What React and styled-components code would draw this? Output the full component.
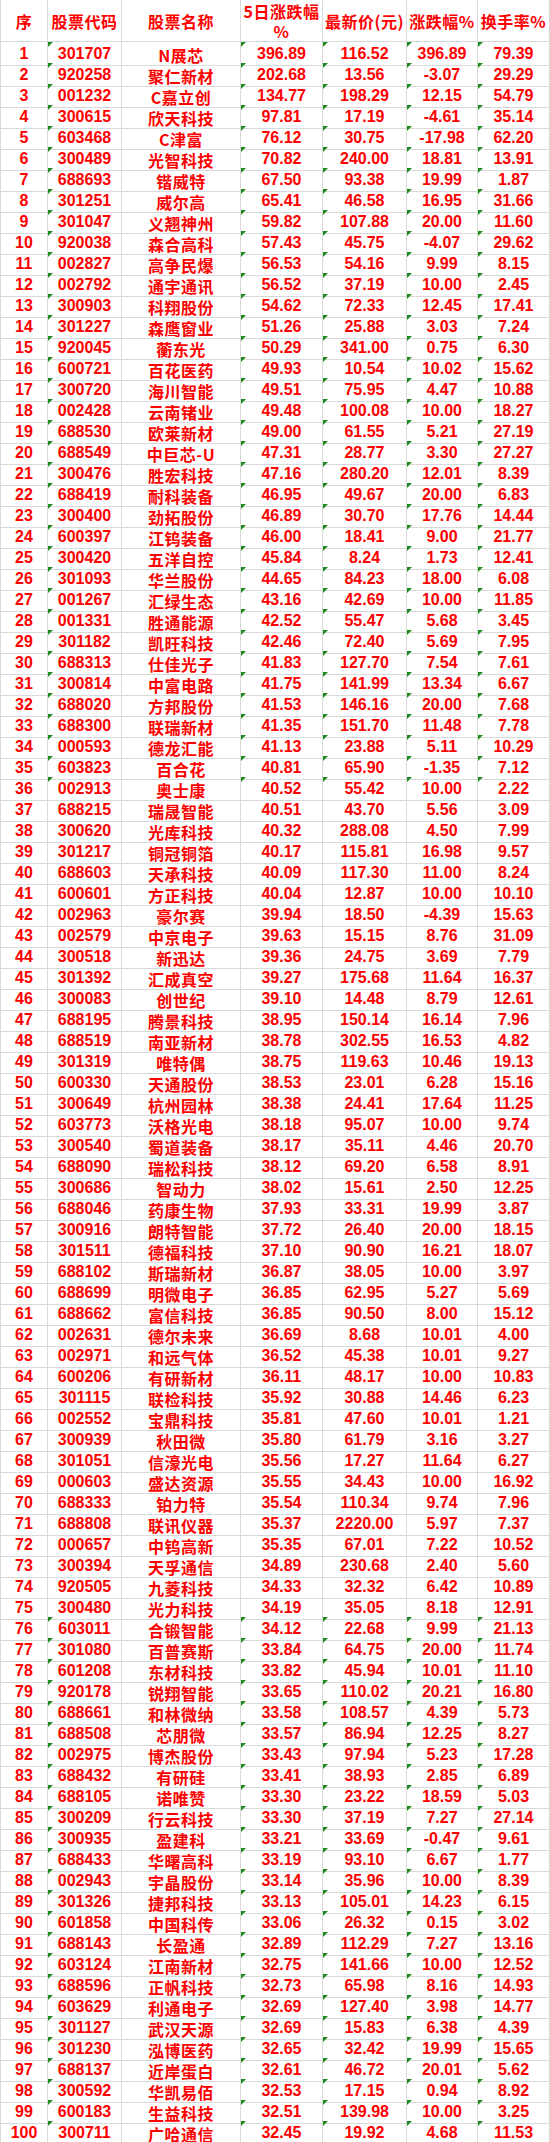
import React from 'react';
import styled, { createGlobalStyle } from 'styled-components';

const rows = `1 301707 N展芯 396.89 116.52 396.89 79.39
2 920258 聚仁新材 202.68 13.56 -3.07 29.29
3 001232 C嘉立创 134.77 198.29 12.15 54.79
4 300615 欣天科技 97.81 17.19 -4.61 35.14
5 603468 C津富 76.12 30.75 -17.98 62.20
6 300489 光智科技 70.82 240.00 18.81 13.91
7 688693 锴威特 67.50 93.38 19.99 1.87
8 301251 威尔高 65.41 46.58 16.95 31.66
9 301047 义翘神州 59.82 107.88 20.00 11.60
10 920038 森合高科 57.43 45.75 -4.07 29.62
11 002827 高争民爆 56.53 54.16 9.99 8.15
12 002792 通宇通讯 56.52 37.19 10.00 2.45
13 300903 科翔股份 54.62 72.33 12.45 17.41
14 301227 森鹰窗业 51.26 25.88 3.03 7.24
15 920045 蘅东光 50.29 341.00 0.75 6.30
16 600721 百花医药 49.93 10.54 10.02 15.62
17 300720 海川智能 49.51 75.95 4.47 10.88
18 002428 云南锗业 49.48 100.08 10.00 18.27
19 688530 欧莱新材 49.00 61.55 5.21 27.19
20 688549 中巨芯-U 47.31 28.77 3.30 27.27
21 300476 胜宏科技 47.16 280.20 12.01 8.39
22 688419 耐科装备 46.95 49.67 20.00 6.83
23 300400 劲拓股份 46.89 30.70 17.76 14.44
24 600397 江钨装备 46.00 18.41 9.00 21.77
25 300420 五洋自控 45.84 8.24 1.73 12.41
26 301093 华兰股份 44.65 84.23 18.00 6.08
27 001267 汇绿生态 43.16 42.69 10.00 11.85
28 001331 胜通能源 42.52 55.47 5.68 3.45
29 301182 凯旺科技 42.46 72.40 5.69 7.95
30 688313 仕佳光子 41.83 127.70 7.54 7.61
31 300814 中富电路 41.75 141.99 13.34 6.67
32 688020 方邦股份 41.53 146.16 20.00 7.68
33 688300 联瑞新材 41.35 151.70 11.48 7.78
34 000593 德龙汇能 41.13 23.88 5.11 10.29
35 603823 百合花 40.81 65.90 -1.35 7.12
36 002913 奥士康 40.52 55.42 10.00 2.22
37 688215 瑞晟智能 40.51 43.70 5.56 3.09
38 300620 光库科技 40.32 288.08 4.50 7.99
39 301217 铜冠铜箔 40.17 115.81 16.98 9.57
40 688603 天承科技 40.09 117.30 11.00 8.24
41 600601 方正科技 40.04 12.87 10.00 10.10
42 002963 豪尔赛 39.94 18.50 -4.39 15.63
43 002579 中京电子 39.63 15.15 8.76 31.09
44 300518 新迅达 39.36 24.75 3.69 7.79
45 301392 汇成真空 39.27 175.68 11.64 16.37
46 300083 创世纪 39.10 14.48 8.79 12.61
47 688195 腾景科技 38.95 150.14 16.14 7.96
48 688519 南亚新材 38.78 302.55 16.53 4.82
49 301319 唯特偶 38.75 119.63 10.46 19.13
50 600330 天通股份 38.53 23.01 6.28 15.16
51 300649 杭州园林 38.38 24.41 17.64 11.25
52 603773 沃格光电 38.18 95.07 10.00 9.74
53 300540 蜀道装备 38.17 35.11 4.46 20.70
54 688090 瑞松科技 38.12 69.20 6.58 8.91
55 300686 智动力 38.02 15.61 2.50 12.25
56 688046 药康生物 37.93 33.31 19.99 3.87
57 300916 朗特智能 37.72 26.40 20.00 18.15
58 301511 德福科技 37.10 90.90 16.21 18.07
59 688102 斯瑞新材 36.87 38.05 10.00 3.97
60 688699 明微电子 36.85 62.95 5.27 5.69
61 688662 富信科技 36.85 90.50 8.00 15.12
62 002631 德尔未来 36.69 8.68 10.01 4.00
63 002971 和远气体 36.52 45.38 10.01 9.27
64 600206 有研新材 36.11 48.17 10.00 10.83
65 301115 联检科技 35.92 30.88 14.46 6.23
66 002552 宝鼎科技 35.81 47.60 10.01 1.21
67 300939 秋田微 35.80 61.79 3.16 3.27
68 301051 信濠光电 35.56 17.27 11.64 6.27
69 000603 盛达资源 35.55 34.43 10.00 16.92
70 688333 铂力特 35.54 110.34 9.74 7.96
71 688808 联讯仪器 35.37 2220.00 5.97 7.37
72 000657 中钨高新 35.35 67.01 7.22 10.52
73 300394 天孚通信 34.89 230.68 2.40 5.60
74 920505 九菱科技 34.33 32.32 6.42 10.89
75 300480 光力科技 34.19 35.05 8.18 12.91
76 603011 合锻智能 34.12 22.68 9.99 21.13
77 301080 百普赛斯 33.84 64.75 20.00 11.74
78 601208 东材科技 33.82 45.94 10.01 11.10
79 920178 锐翔智能 33.65 110.02 20.21 16.80
80 688661 和林微纳 33.58 108.57 4.39 5.73
81 688508 芯朋微 33.57 86.94 12.25 8.27
82 002975 博杰股份 33.43 97.94 5.23 17.28
83 688432 有研硅 33.41 38.93 2.85 6.89
84 688105 诺唯赞 33.30 23.22 18.59 5.03
85 300209 行云科技 33.30 37.19 7.27 27.14
86 300935 盈建科 33.21 33.69 -0.47 9.61
87 688433 华曙高科 33.19 93.10 6.67 1.77
88 002943 宇晶股份 33.14 35.96 10.00 8.39
89 301326 捷邦科技 33.13 105.01 14.23 6.15
90 601858 中国科传 33.06 26.32 0.15 3.02
91 688143 长盈通 32.89 112.29 7.27 13.16
92 603124 江南新材 32.75 141.66 10.00 12.52
93 688596 正帆科技 32.73 65.98 8.16 14.93
94 603629 利通电子 32.69 127.40 3.98 14.77
95 301127 武汉天源 32.69 15.83 6.38 4.39
96 301230 泓博医药 32.65 32.42 19.99 15.65
97 688137 近岸蛋白 32.61 46.72 20.01 5.62
98 300592 华凯易佰 32.53 17.15 0.94 8.92
99 600183 生益科技 32.51 139.98 10.00 3.25
100 300711 广哈通信 32.45 19.92 4.68 11.53`
  .split('\n')
  .map((line) => line.split(' '));

// rows whose numbers were stored as text show Excel's little green corner
const hasFlag = (n) => n <= 36 || n >= 76;

const GlobalStyle = createGlobalStyle`
  body {
    margin: 0;
    background: #fff;
  }
`;

const Sheet = styled.div`
  width: 550px;
  box-sizing: border-box;
  border-left: 1px solid #d9d9d9;
  color: #f00;
  font-family: 'Liberation Sans', 'Noto Sans CJK SC', sans-serif;
  font-weight: 700;
`;

const Row = styled.div`
  display: grid;
  grid-template-columns: 47px 74px 119px 82px 84px 71px 72px;
  height: ${(p) => (p.head ? 42 : 21)}px;
`;

const Cell = styled.div`
  position: relative;
  display: flex;
  align-items: center;
  justify-content: center;
  border-right: 1px solid #d9d9d9;
  border-bottom: 1px solid #d9d9d9;
  font-size: 16px;
  line-height: 20px;
  white-space: nowrap;

  &::before {
    content: '';
    display: ${(p) => (p.flag ? 'block' : 'none')};
    position: absolute;
    top: 0;
    left: 0;
    border-top: 5px solid #1d8a1d;
    border-right: 5px solid transparent;
  }
`;

const NameCell = styled(Cell)`
  font-family: 'Noto Sans CJK SC', sans-serif;
  letter-spacing: 0.5px;
  padding-top: 3px;
`;

const HeadCell = styled(Cell)`
  flex-direction: column;
  font-family: 'Noto Sans CJK SC', 'Liberation Sans', sans-serif;
  font-size: 16px;
  line-height: 20px;
  letter-spacing: 0.5px;
`;

const HeadLine = styled.span`
  display: block;
  height: 20px;
  line-height: 20px;
`;

const headers = ['序', '股票代码', '股票名称', ['5日涨跌幅', '%'], '最新价(元)', '涨跌幅%', '换手率%'];

export default function App() {
  return (
    <>
      <GlobalStyle />
      <Sheet>
        <Row head>
          {headers.map((h, i) => (
            <HeadCell key={i}>
              {Array.isArray(h) ? h.map((t) => <HeadLine key={t}>{t}</HeadLine>) : h}
            </HeadCell>
          ))}
        </Row>
        {rows.map(([n, code, name, d5, price, chg, turn]) => {
          const flag = hasFlag(Number(n));
          return (
            <Row key={n}>
              <Cell>{n}</Cell>
              <Cell flag={flag}>{code}</Cell>
              <NameCell>{name}</NameCell>
              <Cell flag={flag}>{d5}</Cell>
              <Cell flag={flag}>{price}</Cell>
              <Cell flag={flag}>{chg}</Cell>
              <Cell flag={flag}>{turn}</Cell>
            </Row>
          );
        })}
      </Sheet>
    </>
  );
}
